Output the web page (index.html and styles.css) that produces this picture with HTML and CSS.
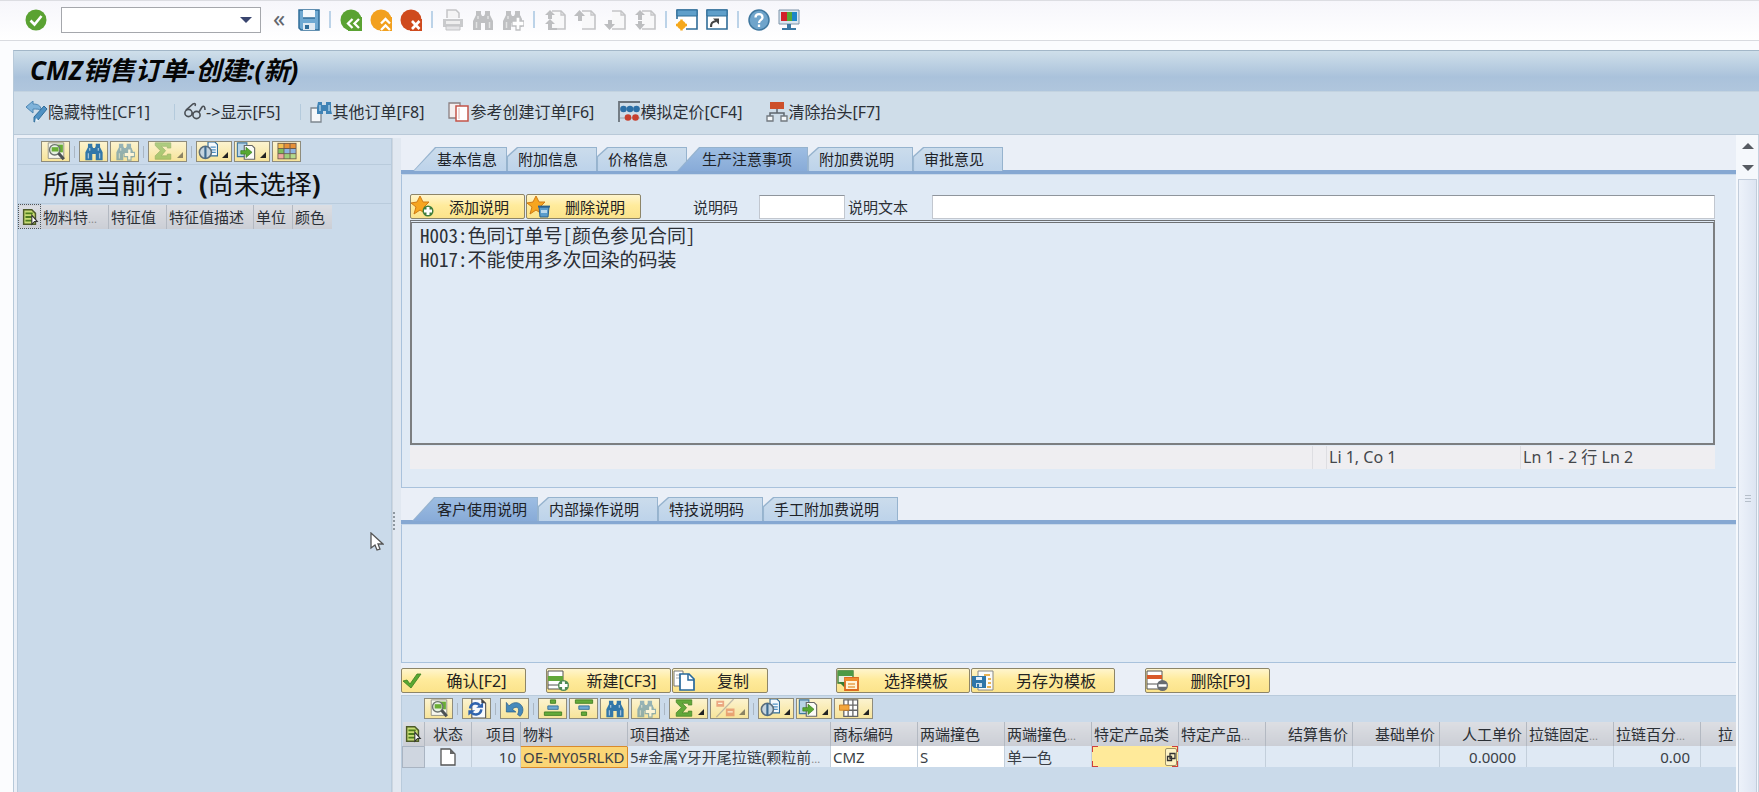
FILE: index.html
```html
<!DOCTYPE html>
<html lang="zh-CN">
<head>
<meta charset="utf-8">
<title>CMZ销售订单-创建:(新)</title>
<link rel="stylesheet" href="styles.css">
</head>
<body>
<svg class="sprite" aria-hidden="true">
  <symbol id="ok" viewBox="0 0 22 22"><circle cx="11" cy="11" r="10.5" fill="#5aa232"/><path d="M5.500 11.500l4 4 7-8.500" fill="none" stroke="#fff" stroke-width="2.600"/></symbol>
  <symbol id="save" viewBox="0 0 22 22"><path d="M1 1h20v20H3l-2-2z" fill="#6fa9d2" stroke="#2f6c98" stroke-width="1.500"/><path d="M5 1h12v8H5z" fill="#f3f8fc"/><path d="M5 9h12" stroke="#2f6c98" stroke-width="1.500"/><path d="M5 14h12v7H5z" fill="#dfeaf3"/><path d="M7 16h4v4H7z" fill="#2f6c98"/></symbol>
  <symbol id="back" viewBox="0 0 22 22"><circle cx="11" cy="11" r="10.5" fill="#5aa232"/><path d="M8 8h14v14H8z" fill="#5aa232"/><path d="M12.500 10l-4.500 4.500 4.500 4.500M19 10l-4.500 4.500L19 19" fill="none" stroke="#fff" stroke-width="2.300"/></symbol>
  <symbol id="exit" viewBox="0 0 22 22"><circle cx="11" cy="11" r="10.5" fill="#f2a01e"/><path d="M10 8h12v14H10z" fill="#f2a01e"/><path d="M11 14.500l4.500-4.500 4.500 4.500M11 21l4.500-4.500L20 21" fill="none" stroke="#fff" stroke-width="2.300"/></symbol>
  <symbol id="cancel" viewBox="0 0 22 22"><circle cx="11" cy="11" r="10.5" fill="#cf4a1d"/><path d="M10 10h12v12H10z" fill="#cf4a1d"/><path d="M12 12l7.500 8M19.500 12L12 20" fill="none" stroke="#fff" stroke-width="2.600"/></symbol>
  <symbol id="print" viewBox="0 0 22 22"><path d="M5 9V1h9l3 3v5" fill="#f4f4f5" stroke="#c3c4c6" stroke-width="1.500"/><path d="M1 10h20v8H1z" fill="#c9cacc"/><path d="M4 12h14v3H4z" fill="#eee"/><path d="M4 17h14v4H4z" fill="#e4e4e6" stroke="#c3c4c6"/></symbol>
  <symbol id="bino" viewBox="0 0 22 22"><path d="M4 2h5v3l1 2h2l1-2V2h5v4l3 6v9h-8v-7h-4v7H1v-9l3-6z" fill="currentColor"/><path d="M4.500 13v6M17.500 13v6M6 7v3M16 7v3" stroke="#fff" stroke-opacity=".55" stroke-width="1.500"/></symbol>
  <symbol id="binoplus" viewBox="0 0 22 22"><path d="M4 2h5v3l1 2h2l1-2V2h5v4l2 4v8h-7v-4h-4v7H1v-9l3-6z" fill="currentColor"/><path d="M4.500 13v6M6 7v3" stroke="#fff" stroke-opacity=".55" stroke-width="1.500"/><path d="M14 8h4v4h4v5h-4v4h-4v-4h-4v-5h4z" fill="#fff" stroke="currentColor" stroke-width="1.300"/></symbol>
  <symbol id="pagebase" viewBox="0 0 22 22"><path d="M8 2h9l4 4v14H8" fill="#f8f8f9" stroke="#c3c4c6" stroke-width="1.600"/><path d="M17 2v4h4" fill="none" stroke="#c3c4c6" stroke-width="1.300"/></symbol>
  <symbol id="pgfirst" viewBox="0 0 22 22"><use href="#pagebase"/><path d="M1 6l5-5 5 5H8v4H4V6zM1 15l5-5 5 5H8v4h5v2H4v-6z" fill="#bdbec0"/></symbol>
  <symbol id="pgprev" viewBox="0 0 22 22"><use href="#pagebase"/><path d="M0 7l5.500-6 5.500 6H8v5H4V7z" fill="#bdbec0"/></symbol>
  <symbol id="pgnext" viewBox="0 0 22 22"><use href="#pagebase"/><path d="M0 15l5.500 6 5.500-6H8v-4H4v4z" fill="#bdbec0"/></symbol>
  <symbol id="pglast" viewBox="0 0 22 22"><use href="#pagebase"/><path d="M1 6l5-5 5 5H8v5H4V6zM1 15l5 6 5-6H8v-3H4v3z" fill="#bdbec0"/></symbol>
  <symbol id="newwin" viewBox="0 0 22 22"><path d="M1 1h20v19H1z" fill="#fff" stroke="#2f6c98" stroke-width="1.600"/><path d="M1 1h20v6H1z" fill="#5f9fca" stroke="#2f6c98"/><path d="M0 10h10v12H0z" fill="#fdfdfe"/><circle cx="5.500" cy="16" r="4.300" fill="#f5a81c"/><path d="M5.500 10.500v11M0 16h11" stroke="#f5a81c" stroke-width="2.500"/></symbol>
  <symbol id="shortcut" viewBox="0 0 22 22"><path d="M1 1h20v19H1z" fill="#fff" stroke="#2f6c98" stroke-width="1.600"/><path d="M1 1h20v6H1z" fill="#5f9fca" stroke="#2f6c98"/><path d="M5 18c0-4 1-5 5-6" fill="none" stroke="#444" stroke-width="2.200"/><path d="M7 9.500h6v6z" fill="#444"/></symbol>
  <symbol id="help" viewBox="0 0 22 22"><circle cx="11" cy="11" r="10" fill="#6fa4cb" stroke="#3f779f" stroke-width="1.500"/><path d="M7.500 8.500c0-4.500 7-4.500 7 0 0 2.500-3.500 2.500-3.500 5.500M11 15.500v2.500" fill="none" stroke="#fff" stroke-width="2.300"/></symbol>
  <symbol id="monitor" viewBox="0 0 22 22"><path d="M1 1h20v14H1z" fill="#d9e6f0" stroke="#7c93a8"/><path d="M3 3h6v9H3z" fill="#d3202a"/><path d="M9 3h5v9H9z" fill="#57a935"/><path d="M14 3h5v9h-5z" fill="#1c86c7"/><path d="M9 15h4v4h5v2H4v-2h5z" fill="#3b78a4"/></symbol>
  <symbol id="wrench" viewBox="0 0 22 22"><path d="M0 6l7-6v3c4 0 8 1 8 6-2-1-4-1-8-1v4z" fill="#7fb3da" stroke="#4d86b3"/><path d="M18 5l3 3-9 11-4 2 0-5z" fill="#4f91c3" stroke="#2f6c98"/><path d="M9 21l1-4 3 3z" fill="#e8f1f8"/></symbol>
  <symbol id="glasses" viewBox="0 0 22 22"><g fill="none" stroke="#4a4f55" stroke-width="1.600"><circle cx="4.500" cy="12" r="3.600"/><circle cx="12.500" cy="14" r="3.600"/><path d="M2 9L9 3c2-1 3 0 2 2M15 11l3-5c2-2 3 0 3 3M8 12l1.500 1"/></g></symbol>
  <symbol id="other" viewBox="0 0 22 22"><path d="M1 7h10v14H1z" fill="#f4f7fa" stroke="#7d868f" stroke-width="1.300"/><path d="M8 1h4v3h4V1h5v8l1 4h-6v-3h-3v3H7V6z" fill="#3f83b6"/><path d="M10 4v6M19 4v6" stroke="#a5cbe6" stroke-width="1.500"/></symbol>
  <symbol id="copyred" viewBox="0 0 22 22"><path d="M1 2h11v15H1z" fill="#f4eeee" stroke="#8b7f80" stroke-width="1.300"/><path d="M8 5h12v15H8z" fill="#fff" stroke="#c4544a" stroke-width="1.500"/><path d="M11 7v11" stroke="#e3b5b0"/></symbol>
  <symbol id="abacus" viewBox="0 0 22 22"><path d="M1 21V1h21" fill="none" stroke="#6b737b" stroke-width="1.800"/><path d="M2 8h20M2 17h20" stroke="#9aa5af"/><g fill="#2c6fa6"><circle cx="5.500" cy="8" r="3.300"/><circle cx="12" cy="8" r="3.300"/><circle cx="18.500" cy="8" r="3.300"/></g><g fill="#c7402f"><circle cx="10" cy="16.500" r="3.300"/><circle cx="17.500" cy="16.500" r="3.300"/></g></symbol>
  <symbol id="tree" viewBox="0 0 22 22"><path d="M4 1h14v7H4z" fill="#cd4f2a"/><path d="M11 8v4M4 15v-3h14v3" fill="none" stroke="#5f666d" stroke-width="1.500"/><path d="M1 15h6v5H1zM15 15h6v5h-6z" fill="#f6f8fa" stroke="#71787f" stroke-width="1.300"/></symbol>
  <symbol id="detail" viewBox="0 0 22 22"><path d="M2 1h18v18H2z" fill="#f7f7ee" stroke="#8b8b80"/><path d="M7 3h12v9H7z" fill="#69ad35"/><circle cx="9.500" cy="9" r="6" fill="#e6f1e2" stroke="#6d7370" stroke-width="1.600"/><path d="M6 6h8v5H6z" fill="#69ad35"/><path d="M14 13l6 7" stroke="#4c5154" stroke-width="3.500"/></symbol>
  <symbol id="sigma" viewBox="0 0 22 22"><path d="M2 1h18v6h-4V5H9l5 5-5 6h7v-2h4v6H2v-4l6-6-6-6z" fill="#62a83a" stroke="#3f7d22" stroke-width=".8"/></symbol>
  <symbol id="printview" viewBox="0 0 22 22"><path d="M11 0h8l3 3v13H11z" fill="#f5f9fc" stroke="#2f6c98" stroke-width="1.300"/><path d="M14 6h6M14 9h6M14 12h6" stroke="#4f91c3" stroke-width="1.500"/><circle cx="8" cy="12" r="7" fill="#c5d5e0" stroke="#5c6e7c" stroke-width="1.800"/><path d="M8 5v14" stroke="#3d6b90" stroke-width="2.500"/></symbol>
  <symbol id="export" viewBox="0 0 22 22"><path d="M1 1h11v16H1z" fill="#b8d4e7" stroke="#3f779f" stroke-width="1.300"/><path d="M9 4h9l3 3v13H9z" fill="#fbfbf7" stroke="#666" stroke-width="1.300"/><path d="M5 10h6V6l7 6-7 6v-4H5z" fill="#58a832" stroke="#3b7d1f" stroke-width=".8"/></symbol>
  <symbol id="grid" viewBox="0 0 22 22"><path d="M0 1h22v19H0z" fill="#6d5b4b"/><path d="M1 2h6v5H1z" fill="#f5c052"/><path d="M8 2h6v5H8zM15 2h6v5h-6z" fill="#e79139"/><path d="M1 8h6v5H1z" fill="#7fbf5c"/><path d="M8 8h6v5H8zM15 8h6v5h-6z" fill="#8db3e0"/><path d="M1 14h6v5H1z" fill="#eda79e"/><path d="M8 14h6v5H8z" fill="#9fcf7a"/><path d="M15 14h6v5h-6z" fill="#b4d88c"/></symbol>
  <symbol id="refresh" viewBox="0 0 22 22"><path d="M5 0h11l5 5v17H5z" fill="#f8fafc" stroke="#555" stroke-width="1.300"/><path d="M16 0v5h5z" fill="#444"/><path d="M3 11c1-7 8-7 11-4" fill="none" stroke="#2f63ae" stroke-width="3"/><path d="M10 10h8V4zM9 13H1v6z" fill="#2f63ae"/><path d="M16 12c-1 7-8 7-11 4" fill="none" stroke="#2f63ae" stroke-width="3"/></symbol>
  <symbol id="undo" viewBox="0 0 22 22"><path d="M1 4v11h11l-4-3c4-5 10-2 6 6l3 2c9-10-3-22-13-12z" fill="#4689bb" stroke="#2a618d" stroke-width=".9"/></symbol>
  <symbol id="asc" viewBox="0 0 22 22"><path d="M8 1h6v4H8z" fill="#64aa3a" stroke="#3f7d22"/><path d="M5 8h12v4H5z" fill="#6fa9d2" stroke="#2f6c98"/><path d="M1 15h20v4H1z" fill="#64aa3a" stroke="#3f7d22"/></symbol>
  <symbol id="desc" viewBox="0 0 22 22"><path d="M1 1h20v4H1z" fill="#64aa3a" stroke="#3f7d22"/><path d="M5 8h12v4H5z" fill="#6fa9d2" stroke="#2f6c98"/><path d="M8 15h6v4H8z" fill="#64aa3a" stroke="#3f7d22"/></symbol>
  <symbol id="subtotal" viewBox="0 0 22 22"><path d="M1 2h9v7H1zM12 11h10v9H12z" fill="#dc6242"/><path d="M21 0L1 21" stroke="#85858c" stroke-width="1.500"/><path d="M3 5h5M14 15h6" stroke="#fff" stroke-width="1.500"/></symbol>
  <symbol id="layout" viewBox="0 0 22 22"><path d="M5 1h16v19H5z" fill="#fff" stroke="#666" stroke-width="1.500"/><path d="M10 1v19M15.500 1v19M5 7h16M5 13h16" stroke="#666" stroke-width="1.500"/><path d="M0 7h11v6H0z" fill="#f3a63c" stroke="#d07f20"/></symbol>
  <symbol id="rowsel" viewBox="0 0 22 22"><path d="M4 3h9l4 4v12H4z" fill="#c8dc74" stroke="#4c5a28" stroke-width="1.600"/><path d="M6 7h8M6 11h8M6 15h8" stroke="#4d7c1c" stroke-width="2"/><path d="M13 9l6 7h-3l-3 3z" fill="#fff" stroke="#333" stroke-width="1.200"/></symbol>
  <symbol id="staradd" viewBox="0 0 24 22"><path d="M9 0l3 6 6 0-5 5 2 7-6-4-6 4 2-7-5-4 6-1z" fill="#f6a51f" stroke="#cf7a14"/><circle cx="17" cy="15" r="5.500" fill="#3f7d3c"/><path d="M17 11v8M13 15h8" stroke="#fff" stroke-width="3"/></symbol>
  <symbol id="stardel" viewBox="0 0 24 22"><path d="M9 0l3 6 6 0-5 5 2 7-6-4-6 4 2-7-5-4 6-1z" fill="#f6a51f" stroke="#cf7a14"/><path d="M12 11h10l-1 10h-8z" fill="#5a9ccb" stroke="#2a618d"/><path d="M11 10.500h12" stroke="#2a618d" stroke-width="1.800"/><path d="M14 14h6v3h-6z" fill="#b8d7ec"/></symbol>
  <symbol id="tick" viewBox="0 0 22 22"><path d="M1 11l4-1 3 4L15 4l4 0L9 18z" fill="#58a832" stroke="#3c7d20" stroke-width=".8"/></symbol>
  <symbol id="rowadd" viewBox="0 0 22 22"><path d="M1 1h15v18H1z" fill="#fff" stroke="#555"/><path d="M1 6h15v5H1z" fill="#62a83a"/><path d="M1 15h15" stroke="#555"/><circle cx="16.500" cy="15.500" r="5.500" fill="#4f8a55"/><path d="M16.500 11.500v8M12.500 15.500h8" stroke="#fff" stroke-width="2.800"/></symbol>
  <symbol id="rowdel" viewBox="0 0 22 22"><path d="M1 1h15v18H1z" fill="#fff" stroke="#555"/><path d="M1 5h15v4H1z" fill="#d9592a"/><path d="M1 14h15" stroke="#555"/><circle cx="16.500" cy="15.500" r="5.500" fill="#666b70"/><path d="M12.500 15.500h8" stroke="#fff" stroke-width="2.500"/></symbol>
  <symbol id="copy" viewBox="0 0 22 22"><path d="M1 1h9v15H1z" fill="#fff" stroke="#777"/><path d="M3 5h5M3 8h5" stroke="#aaa"/><path d="M7 4h9l5 5v11H7z" fill="#fff" stroke="#28699c" stroke-width="1.700"/><path d="M15 4v6h6" fill="none" stroke="#28699c" stroke-width="1.500"/></symbol>
  <symbol id="tpl" viewBox="0 0 22 22"><path d="M1 1h15v12H1z" fill="#e6f0e2" stroke="#357b35" stroke-width="1.300"/><path d="M1 1h15v5H1z" fill="#4d9a45"/><path d="M2 12h6v6z" fill="#357b35"/><path d="M8 8h13v12H8z" fill="#fff3d8" stroke="#dc6a1f" stroke-width="1.800"/><path d="M8 8h13v3H8z" fill="#ee8d2e"/><path d="M11 14h7M11 17h7" stroke="#e9a14b" stroke-width="1.500"/></symbol>
  <symbol id="savetpl" viewBox="0 0 22 22"><path d="M6 1h15v19H6z" fill="#fbfbf8" stroke="#888"/><path d="M12 5h6M16 9h3M16 13h3M15 17h4" stroke="#e9b254" stroke-width="1.800"/><path d="M0 6h14v12H2l-2-2z" fill="#2e75a9"/><path d="M4 7h6v3H4z" fill="#e5f0f8"/><path d="M4 13h6v4H4z" fill="#cfe0ee"/><path d="M5 14h2v3H5z" fill="#2e75a9"/></symbol>
</svg>

<header class="sysbar">
  <button class="ic" aria-label="回车"><svg><use href="#ok"/></svg></button>
  <div class="combo"><input type="text" aria-label="命令字段"><span class="combo-arrow"></span></div>
  <button class="ic chev" aria-label="收起">«</button>
  <button class="ic" aria-label="保存"><svg><use href="#save"/></svg></button>
  <i class="sep"></i>
  <button class="ic" aria-label="返回"><svg><use href="#back"/></svg></button>
  <button class="ic" aria-label="退出"><svg><use href="#exit"/></svg></button>
  <button class="ic" aria-label="取消"><svg><use href="#cancel"/></svg></button>
  <i class="sep"></i>
  <button class="ic" aria-label="打印"><svg><use href="#print"/></svg></button>
  <button class="ic gray" aria-label="查找"><svg><use href="#bino"/></svg></button>
  <button class="ic gray" aria-label="继续查找"><svg><use href="#binoplus"/></svg></button>
  <i class="sep"></i>
  <button class="ic" aria-label="首页"><svg><use href="#pgfirst"/></svg></button>
  <button class="ic" aria-label="上一页"><svg><use href="#pgprev"/></svg></button>
  <button class="ic" aria-label="下一页"><svg><use href="#pgnext"/></svg></button>
  <button class="ic" aria-label="末页"><svg><use href="#pglast"/></svg></button>
  <i class="sep"></i>
  <button class="ic" aria-label="新建会话"><svg><use href="#newwin"/></svg></button>
  <button class="ic" aria-label="创建快捷方式"><svg><use href="#shortcut"/></svg></button>
  <i class="sep"></i>
  <button class="ic" aria-label="帮助"><svg><use href="#help"/></svg></button>
  <button class="ic" aria-label="布局"><svg><use href="#monitor"/></svg></button>
</header>

<main class="window">
  <div class="titlebar"><h1>CMZ销售订单-创建:(新)</h1></div>
  <nav class="appbar">
    <button><svg><use href="#wrench"/></svg>隐藏特性[CF1]</button>
    <i class="sep"></i>
    <button><svg><use href="#glasses"/></svg>-&gt;显示[F5]</button>
    <i class="sep"></i>
    <button><svg><use href="#other"/></svg>其他订单[F8]</button>
    <button><svg><use href="#copyred"/></svg>参考创建订单[F6]</button>
    <button><svg><use href="#abacus"/></svg>模拟定价[CF4]</button>
    <button><svg><use href="#tree"/></svg>清除抬头[F7]</button>
  </nav>

  <div class="body">
    <aside class="side">
      <div class="gridbar">
        <button class="gb" aria-label="明细"><svg><use href="#detail"/></svg></button>
        <i class="gsep"></i>
        <button class="gb blue" aria-label="查找"><svg><use href="#bino"/></svg></button>
        <button class="gb blue off" aria-label="继续查找"><svg><use href="#binoplus"/></svg></button>
        <i class="gsep"></i>
        <button class="gb drop off" aria-label="总计"><svg><use href="#sigma"/></svg></button>
        <i class="gsep"></i>
        <button class="gb drop thin" aria-label="打印视图"><svg><use href="#printview"/></svg></button>
        <button class="gb drop thin" aria-label="导出"><svg><use href="#export"/></svg></button>
        <button class="gb" aria-label="布局"><svg><use href="#grid"/></svg></button>
      </div>
      <h2>所属当前行：<b>(</b>尚未选择<b>)</b></h2>
      <table class="feat">
        <thead><tr>
          <th class="f-sel"><svg><use href="#rowsel"/></svg></th>
          <th class="f-a">物料特<small>...</small></th>
          <th class="f-b">特征值</th>
          <th class="f-c">特征值描述</th>
          <th class="f-d">单位</th>
          <th class="f-d">颜色</th>
        </tr></thead>
      </table>
      <svg class="cursor" viewBox="0 0 14 20"><path d="M1 1v15l4-3 2 5 3-1-2-5h5z" fill="#fff" stroke="#555" stroke-width="1.300"/></svg>
    </aside>
    <div class="splitter"><i></i></div>

    <section class="work">
      <div class="tabs" role="tablist">
        <button class="tab first" role="tab">基本信息</button>
        <button class="tab" role="tab">附加信息</button>
        <button class="tab" role="tab">价格信息</button>
        <button class="tab on lap" role="tab" aria-selected="true">生产注意事项</button>
        <button class="tab" role="tab">附加费说明</button>
        <button class="tab" role="tab">审批意见</button>
      </div>
      <div class="panel notes">
        <div class="noteform">
          <button class="btn star"><svg><use href="#staradd"/></svg>添加说明</button>
          <button class="btn star"><svg><use href="#stardel"/></svg>删除说明</button>
          <label class="lb-code" for="code">说明码</label><input class="in-code" id="code" type="text">
          <label class="lb-text" for="text">说明文本</label><input class="in-text" id="text" type="text">
        </div>
        <textarea class="editor" aria-label="说明" spellcheck="false">H003:色同订单号[颜色参见合同]
H017:不能使用多次回染的码装</textarea>
        <div class="status"><span class="s0"></span><span class="s1"></span><span class="s2">Li 1, Co 1</span><span class="s3">Ln 1 - 2 行 Ln 2</span></div>
      </div>

      <div class="tabs low" role="tablist">
        <button class="tab on" role="tab" aria-selected="true">客户使用说明</button>
        <button class="tab" role="tab">内部操作说明</button>
        <button class="tab" role="tab">特技说明码</button>
        <button class="tab" role="tab">手工附加费说明</button>
      </div>
      <div class="panel blank"></div>

      <div class="actions">
        <button class="btn w-m"><svg><use href="#tick"/></svg><span>确认[F2]</span></button>
        <button class="btn w-m gap-a"><svg><use href="#rowadd"/></svg><span>新建[CF3]</span></button>
        <button class="btn w-s"><svg><use href="#copy"/></svg><span>复制</span></button>
        <button class="btn w-l gap-b"><svg><use href="#tpl"/></svg><span>选择模板</span></button>
        <button class="btn w-x"><svg><use href="#savetpl"/></svg><span>另存为模板</span></button>
        <button class="btn w-m gap-c"><svg><use href="#rowdel"/></svg><span>删除[F9]</span></button>
      </div>

      <div class="alv">
        <div class="gridbar">
          <button class="gb" aria-label="明细"><svg><use href="#detail"/></svg></button>
          <i class="gsep"></i>
          <button class="gb" aria-label="刷新"><svg><use href="#refresh"/></svg></button>
          <i class="gsep"></i>
          <button class="gb" aria-label="撤销"><svg><use href="#undo"/></svg></button>
          <i class="gsep"></i>
          <button class="gb" aria-label="升序"><svg><use href="#asc"/></svg></button>
          <button class="gb" aria-label="降序"><svg><use href="#desc"/></svg></button>
          <button class="gb blue" aria-label="查找"><svg><use href="#bino"/></svg></button>
          <button class="gb blue off" aria-label="继续查找"><svg><use href="#binoplus"/></svg></button>
          <i class="gsep"></i>
          <button class="gb drop" aria-label="总计"><svg><use href="#sigma"/></svg></button>
          <button class="gb drop off" aria-label="小计"><svg><use href="#subtotal"/></svg></button>
          <i class="gsep"></i>
          <button class="gb drop thin" aria-label="打印视图"><svg><use href="#printview"/></svg></button>
          <button class="gb drop thin" aria-label="导出"><svg><use href="#export"/></svg></button>
          <button class="gb drop" aria-label="布局"><svg><use href="#layout"/></svg></button>
        </div>
        <table class="items">
          <colgroup><col class="c-sel"><col class="c-st"><col class="c-no"><col class="c-mat"><col class="c-desc"><col span="11" class="c-x"></colgroup>
          <thead><tr>
            <th class="mid"><svg><use href="#rowsel"/></svg></th><th class="mid">状态</th><th class="num">项目</th><th>物料</th><th>项目描述</th><th>商标编码</th><th>两端撞色</th><th>两端撞色<small>...</small></th><th>特定产品类</th><th>特定产品<small>...</small></th><th class="num">结算售价</th><th class="num">基础单价</th><th class="num">人工单价</th><th>拉链固定<small>...</small></th><th>拉链百分<small>...</small></th><th class="last">拉</th>
          </tr></thead>
          <tbody><tr>
            <td class="rowsel"></td><td class="mid"><svg class="doc" viewBox="0 0 16 18"><path d="M1 1h9l5 5v11H1z" fill="#fff" stroke="#555" stroke-width="1.300"/><path d="M10 1v5h5z" fill="#666"/></svg></td><td class="num">10</td><td class="hot">OE-MY05RLKD</td><td>5#金属Y牙开尾拉链(颗粒前<small>...</small></td><td class="edit">CMZ</td><td class="edit">S</td><td>单一色</td>
            <td class="focus"><div><input type="text" aria-label="特定产品类"><button aria-label="选择值"><svg viewBox="0 0 10 12"><path d="M4 2.500h5v5H4zM1.500 5.500h4v4h-4z" fill="#fdf3c4" stroke="#333" stroke-width="1.300"/></svg></button></div></td>
            <td></td><td></td><td></td><td class="num pad">0.0000</td><td></td><td class="num pad">0.00</td><td></td>
          </tr></tbody>
        </table>
      </div>
    </section>

    <div class="scroll">
      <button class="up" aria-label="向上滚动"></button>
      <button class="down" aria-label="向下滚动"></button>
      <div class="thumb"><i></i></div>
    </div>
  </div>
</main>
</body>
</html>
```
FILE: styles.css
```css
* { box-sizing: border-box; }
body {
  margin: 0;
  height: 100vh;
  display: flex;
  flex-direction: column;
  overflow: hidden;
  background: #fbfcfe;
  color: #2c3036;
  font: 15px/20px "Noto Sans", "Noto Sans CJK SC", sans-serif;
}
button, input, textarea { font: inherit; color: inherit; margin: 0; }
button { padding: 0; border: 0; background: none; white-space: nowrap; }
svg { display: block; flex: none; width: 22px; height: 22px; }
.sprite { position: absolute; width: 0; height: 0; }

/* system toolbar */
.sysbar {
  display: flex;
  align-items: center;
  gap: 8px;
  height: 41px;
  padding: 0 25px 2px;
  border-top: 1px solid #dcdde2;
  border-bottom: 1px solid #d9dbe0;
  background: linear-gradient(#f6f6fb, #fff);
}
.sysbar .gray { color: #bfc0c2; }
.sysbar .sep { width: 2px; height: 17px; margin: 0 1px; background: #bcd3e8; }
.combo {
  display: flex;
  align-items: center;
  width: 200px;
  height: 26px;
  margin: 0 -1px 0 6px;
  border: 1px solid #a5a7ac;
  background: #fff;
}
.combo input { flex: 1; min-width: 0; border: 0; outline: 0; background: none; }
.combo-arrow { margin-right: 8px; border: 6px solid transparent; border-top-color: #39456f; border-bottom: 0; }
.chev { width: 22px; padding-bottom: 4px; color: #62666d; font-size: 24px; }

/* window frame */
.window {
  flex: 1;
  min-height: 0;
  display: flex;
  flex-direction: column;
  margin: 9px 0 0 13px;
  border-top: 1px solid #a3b7c8;
  border-left: 1px solid #b7c9d9;
  background: #eaeff7;
}
.titlebar { height: 40px; padding: 0 16px; background: linear-gradient(#cfdfea, #aac2db 65%, #b0c6dd); }
h1 { margin: 0; color: #050505; font-size: 26px; line-height: 38px; font-style: italic; font-weight: 700; }
.appbar {
  display: flex;
  align-items: center;
  height: 44px;
  padding: 0 12px 2px;
  border-top: 1px solid #c3d3e0;
  border-bottom: 1px solid #b9c9d8;
  background: #cfdde9;
  font-size: 16px;
}
.appbar button { display: flex; align-items: center; margin-right: 24px; }
.appbar .sep { width: 1px; height: 16px; margin: 0 9px 0 0; background: #b4cadc; }
.appbar .sep + button { margin-right: 20px; }
.appbar .sep + button:nth-of-type(3) { margin-right: 24px; }

.body { flex: 1; min-height: 0; display: flex; }

/* feature panel */
.side {
  position: relative;
  width: 375px;
  margin: 3px 0 0 3px;
  border: 1px solid #b9cbdc;
  border-bottom: 0;
  background: #cadaea;
}
.side .gridbar { padding-left: 23px; border-bottom: 1px solid #b9cbdc; height: 26px; }
h2 {
  margin: 0;
  padding-left: 25px;
  height: 39px;
  border-bottom: 1px solid #b9cbdc;
  color: #111;
  font-size: 26px;
  line-height: 38px;
  font-weight: 400;
}
.feat { border-collapse: collapse; table-layout: fixed; width: 312px; }
.feat th, .items th {
  height: 24px;
  padding: 0 0 0 2px;
  border-right: 1px solid #b3b9c2;
  background: linear-gradient(#dcdee3, #cbced5);
  font-weight: 400;
  text-align: left;
  white-space: nowrap;
  overflow: hidden;
}
.feat th:last-child { border-right: 0; }
.feat th svg, .items th svg { width: 20px; height: 20px; margin: 0 auto; }
.feat .f-sel { width: 22px; padding: 0; border: 1px dotted #555; }
.feat .f-a { width: 68px; }
.feat .f-b { width: 58px; }
.feat .f-c { width: 87px; }
.feat .f-d { width: 39px; }
small { font-size: 11px; line-height: 12px; color: #888; }
.cursor { position: absolute; left: 352px; top: 393px; width: 14px; height: 20px; }
.splitter { width: 9px; margin-top: 3px; padding-top: 374px; background: #e1e8f1; border-left: 1px solid #cdd6e0; }
.splitter i { display: block; width: 2px; height: 18px; background: repeating-linear-gradient(#8e979f 0 2px, transparent 2px 4px); }

/* grid toolbars */
.gridbar { display: flex; align-items: center; gap: 2px; }
.gb {
  display: flex;
  justify-content: center;
  width: 29px;
  height: 21px;
  border: 1px solid #8f8c7c;
  background: linear-gradient(#fcf3cf, #f7e49a);
}
.gb svg { width: 20px; height: 19px; }
.gb.blue { color: #3277a9; }
.gb.drop { position: relative; width: 39px; justify-content: flex-start; padding-left: 4px; }
.gb.thin { width: 36px; padding-left: 1px; }
.gb.drop::after { content: ""; position: absolute; right: 3px; bottom: 3px; border: 3px solid #222; border-top-color: transparent; border-left-color: transparent; }
.gb.off svg, .gb.off::after { opacity: .5; }
.gsep { width: 1px; height: 12px; margin: 0 2px; background: #aab6c2; }

/* tabs */
.work { flex: 1; min-width: 0; display: flex; flex-direction: column; overflow: hidden; }
.tabs { display: flex; height: 39px; padding: 12px 0 0 12px; border-bottom: 4px solid #86a8d2; }
.tabs.low { height: 36px; padding: 9px 0 0 11px; }
.tab {
  --cut: polygon(0 9px, 10px 0, 100% 0, 100% 100%, 0 100%);
  --fill: linear-gradient(#cbdcec, #bdd3ea);
  position: relative;
  isolation: isolate;
  height: 24px;
  padding: 0 19px 0 11px;
  color: #1d2228;
}
.tab::before, .tab::after { content: ""; position: absolute; z-index: -1; clip-path: var(--cut); }
.tab::before { inset: 0; background: #96b3ce; }
.tab::after { inset: 1px 1px 0 1px; background: var(--fill); }
.tab.first, .tab.on { --cut: polygon(0 100%, 22px 0, 100% 0, 100% 100%); }
.tab.first { padding: 0 10px 0 24px; }
.tab.on { --fill: linear-gradient(#9dbde2, #88abd8); padding: 0 11px 0 25px; }
.tab.lap { margin-left: -10px; padding-right: 16px; }

.panel { border: 1px solid #a9c2dc; border-top-color: #c9d9ea; border-right: 0; background: #e0eaf5; }
.notes { padding: 19px 21px 18px 8px; }
.blank { height: 139px; }

/* note form */
.noteform { display: flex; align-items: center; height: 25px; }
.noteform input { height: 24px; border: 1px solid #c2c7cf; border-top-color: #8f959c; background: #fff; padding: 0 3px; }
.lb-code { width: 66px; margin-left: 51px; }
.in-code { width: 86px; }
.lb-text { width: 84px; margin-left: 3px; }
.in-text { flex: 1; min-width: 0; }
.btn {
  display: flex;
  align-items: center;
  height: 25px;
  border: 1px solid #8d8568;
  border-radius: 2px;
  background: linear-gradient(#fff5cd, #ffeb9c 45%, #fbe38b);
  color: #222;
}
.btn.star { width: 115px; gap: 14px; margin-right: 1px; }
.btn.star svg { width: 24px; }
.editor {
  display: block;
  width: 100%;
  height: 225px;
  margin-top: 1px;
  padding: 0 8px;
  border: 2px solid #7c7e80;
  border-top: 3px double #6d7073;
  border-radius: 0;
  outline: 0;
  resize: none;
  background: #e0eaf5;
  font: 19px/24px "Noto Sans CJK SC", sans-serif;
  font-feature-settings: "hwid";
}
.status { display: flex; height: 23px; margin-top: 1px; background: #efeef1; color: #44474b; font-size: 16px; line-height: 22px; }
.status span { padding-left: 2px; border-right: 1px solid #dedee2; }
.status .s0 { flex: 1; }
.status .s1 { width: 14px; }
.status .s2 { width: 194px; }
.status .s3 { width: 194px; border-right: 0; }

/* action row */
.actions { display: flex; height: 32px; padding: 5px 0 0; font-size: 16px; }
.actions .btn { margin-right: 1px; }
.actions .btn span { flex: 1; padding-left: 4px; }
.w-m { width: 125px; }
.w-s { width: 96px; }
.w-l { width: 134px; }
.w-x { width: 144px; }
.gap-a { margin-left: 19px; }
.gap-b { margin-left: 67px; }
.gap-c { margin-left: 29px; }

/* item grid */
.alv { flex: 1; border: 1px solid #b9cbdc; border-bottom: 0; border-right: 0; background: #cadaea; overflow: hidden; }
.alv .gridbar { height: 26px; padding: 0 0 1px 22px; }
.items { border-collapse: collapse; table-layout: fixed; width: 1385px; }
.c-sel { width: 22px; }
.c-st { width: 47px; }
.c-no { width: 49px; }
.c-mat { width: 107px; }
.c-desc { width: 203px; }
.c-x { width: 87px; }
.items td { height: 21px; padding: 0 0 0 2px; border-right: 1px solid #c3cfdb; background: #dfe9f4; white-space: nowrap; overflow: hidden; color: #3a3f46; line-height: 18px; }
.items .mid { padding: 0; text-align: center; }
.items .num { padding: 0 4px 0 0; text-align: right; }
.items .pad { padding-right: 10px; }
.items th.last { padding-left: 17px; }
.items td.rowsel { border: 1px solid #a9b4c2; background: #cfd6e0; }
.doc { width: 16px; height: 18px; margin: 0 auto; }
.items td.hot { border: 1px solid #d98a2c; background: #fbd676; }
.items td.edit { background: #fff; }
.items td.focus {
  --r: linear-gradient(#cf3f3a, #cf3f3a);
  padding: 0;
  background:
    var(--r) 0 0 / 6px 1px, var(--r) 0 0 / 1px 6px,
    var(--r) 100% 0 / 6px 1px, var(--r) 100% 0 / 1px 6px,
    var(--r) 0 100% / 6px 1px, var(--r) 0 100% / 1px 6px,
    var(--r) 100% 100% / 6px 1px, var(--r) 100% 100% / 1px 6px, #ffea9a;
  background-repeat: no-repeat;
}
.focus div { display: flex; justify-content: flex-end; padding-right: 1px; }
.focus input { flex: 1; min-width: 0; height: 18px; padding: 0; border: 0; outline: 0; background: none; }
.focus button { width: 12px; height: 18px; border: 1px solid #a09468; border-radius: 2px; background: #fdf3c4; }
.focus button svg { width: 10px; height: 12px; }

/* scroll bar */
.scroll { display: flex; flex-direction: column; width: 23px; padding: 0 1px 0 2px; border-right: 1px solid #c7d2df; background: #f5f8fc; }
.scroll button { height: 22px; display: grid; place-items: center; }
.scroll button::before { content: ""; border: 6px solid transparent; }
.scroll .up::before { border-top: 0; border-bottom-color: #565b62; }
.scroll .down::before { border-bottom: 0; border-top-color: #565b62; }
.thumb { flex: 1; display: grid; place-items: center; padding-top: 26px; border: 1px solid #c2cddb; border-bottom: 0; background: linear-gradient(90deg, #edf2fa, #dde5f2); }
.thumb i { width: 6px; height: 8px; background: repeating-linear-gradient(#b6bfca 0 1px, transparent 1px 3px); }
```
